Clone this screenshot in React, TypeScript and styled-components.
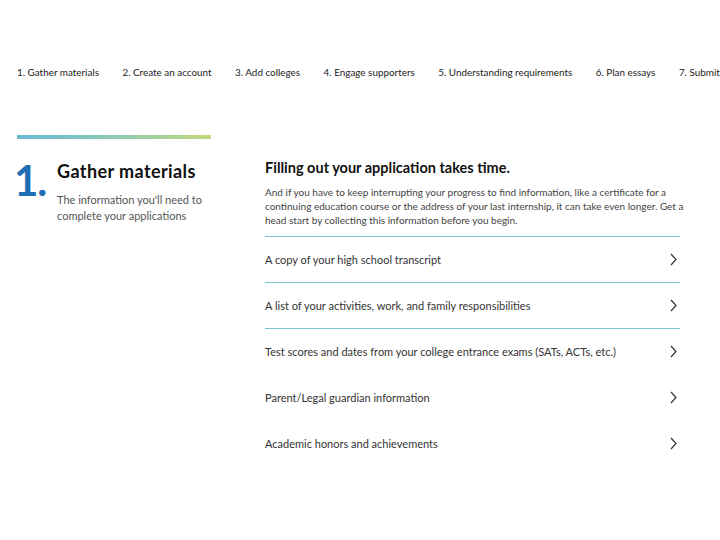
import React from "react";
import styled, { createGlobalStyle } from "styled-components";

const Global = createGlobalStyle`
  html, body { margin: 0; padding: 0; background: #fff; }
  body { font-family: Lato, "Noto Sans", sans-serif; color: #222; }
`;

const Page = styled.div`
  width: 720px;
  height: 540px;
  overflow: hidden;
  padding: 0 0 0 17px;
  box-sizing: border-box;
`;

const Nav = styled.nav`
  display: flex;
  gap: 23.5px;
  padding-top: 66px;
  white-space: nowrap;
  overflow: hidden;
  font-size: 9.9px;
  color: #222;
  height: 14px;
`;

const NavItem = styled.span`
  flex: none;
  line-height: 12px;
`;

const Main = styled.div`
  display: flex;
  margin-top: 55px;
`;

const Left = styled.div`
  width: 248px;
  flex: none;
`;

const GradientBar = styled.div`
  width: 194px;
  height: 4px;
  background: linear-gradient(90deg, #69b9d7 0%, #8ccbb4 50%, #c4da7a 100%);
`;

const Intro = styled.div`
  display: flex;
  margin-top: 21px;
`;

const BigNum = styled.div`
  font-size: 42px;
  font-weight: 700;
  color: #1f6db5;
  line-height: 40px;
  width: 43px;
  margin-left: -3px;
  letter-spacing: -1px;
`;

const IntroText = styled.div`
  display: flex;
  flex-direction: column;
`;

const Title = styled.h2`
  margin: 0;
  font-size: 18px;
  font-weight: 700;
  color: #111;
  line-height: 20px;
  margin-top: 1px;
  letter-spacing: 0.4px;
`;

const Sub = styled.p`
  margin: 11px 0 0;
  font-size: 11px;
  line-height: 16px;
  color: #555;
  width: 160px;
`;

const Right = styled.div`
  width: 415px;
  padding-top: 24px;
`;

const Heading = styled.h3`
  margin: 0;
  font-size: 14.5px;
  font-weight: 700;
  color: #111;
  line-height: 18px;
`;

const Para = styled.p`
  margin: 8px -8px 0 0;
  font-size: 10px;
  line-height: 14px;
  color: #444;
`;

const List = styled.ul`
  list-style: none;
  margin: 9px 0 0;
  padding: 0;
`;

const Item = styled.li<{ $line: boolean }>`
  display: flex;
  align-items: center;
  justify-content: space-between;
  height: 45px;
  border-top: 1px solid ${(p) => (p.$line ? "#7cc4c9" : "transparent")};
  font-size: 11px;
  color: #333;
  padding-right: 3px;
`;

const Chevron = () => (
  <svg width="7" height="13" viewBox="0 0 7 13" fill="none">
    <path d="M1 1 L6 6.5 L1 12" stroke="#333" strokeWidth="1.2" />
  </svg>
);

const navItems = [
  "1. Gather materials",
  "2. Create an account",
  "3. Add colleges",
  "4. Engage supporters",
  "5. Understanding requirements",
  "6. Plan essays",
  "7. Submit",
];

const items = [
  "A copy of your high school transcript",
  "A list of your activities, work, and family responsibilities",
  "Test scores and dates from your college entrance exams (SATs, ACTs, etc.)",
  "Parent/Legal guardian information",
  "Academic honors and achievements",
];

export default function App() {
  return (
    <Page>
      <Global />
      <Nav>
        {navItems.map((n) => (
          <NavItem key={n}>{n}</NavItem>
        ))}
      </Nav>
      <Main>
        <Left>
          <GradientBar />
          <Intro>
            <BigNum>1.</BigNum>
            <IntroText>
              <Title>Gather materials</Title>
              <Sub>The information you'll need to complete your applications</Sub>
            </IntroText>
          </Intro>
        </Left>
        <Right>
          <Heading>Filling out your application takes time.</Heading>
          <Para>
            And if you have to keep interrupting your progress to find information, like a certificate for a
            continuing education course or the address of your last internship, it can take even longer. Get a
            head start by collecting this information before you begin.
          </Para>
          <List>
            {items.map((t, i) => (
              <Item key={t} $line={i < 3}>
                <span>{t}</span>
                <Chevron />
              </Item>
            ))}
          </List>
        </Right>
      </Main>
    </Page>
  );
}
